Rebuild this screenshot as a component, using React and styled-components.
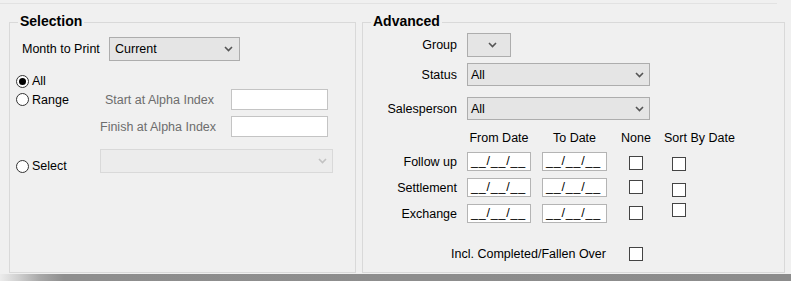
import React from 'react';
import styled, { createGlobalStyle } from 'styled-components';

const GlobalStyle = createGlobalStyle`
  html, body {
    margin: 0;
    padding: 0;
    background: #f0f0f0;
  }
  body {
    font-family: "Liberation Sans", Arial, sans-serif;
    font-size: 12.5px;
    color: #000;
  }
`;

const Window = styled.div`
  width: 791px;
  height: 281px;
  display: flex;
  flex-direction: column;
  background: #f0f0f0;
  overflow: hidden;
`;

const TopRule = styled.div`
  width: 777px;
  height: 1px;
  margin-top: 3px;
  background: #e2e2e2;
`;

const Panels = styled.div`
  flex: 1;
  display: flex;
  gap: 6px;
  padding: 18px 0 0 9px;
`;

const GroupBox = styled.div`
  width: ${p => p.$width}px;
  height: 251px;
  box-sizing: border-box;
  border: 1px solid #d9d9d9;
`;

const Caption = styled.div`
  width: fit-content;
  margin: -10px 0 0 8px;
  padding: 0 2px;
  background: #f0f0f0;
  font-size: 14px;
  font-weight: bold;
  line-height: 16px;
`;

const Row = styled.div`
  display: flex;
  align-items: ${p => p.$align || 'center'};
  height: ${p => p.$h}px;
  margin-top: ${p => p.$top}px;
  padding-left: ${p => p.$indent || 0}px;
`;

const FieldLabel = styled.div`
  width: ${p => p.$width}px;
  margin-right: ${p => p.$gap || 0}px;
  text-align: ${p => p.$right ? 'right' : 'left'};
  color: ${p => p.$muted ? '#6d6d6d' : '#000'};
  white-space: nowrap;
  line-height: 14px;
`;

const ComboBox = styled.div`
  width: ${p => p.$width}px;
  height: ${p => p.$h || 24}px;
  box-sizing: border-box;
  display: flex;
  align-items: center;
  justify-content: space-between;
  padding: 0 ${p => p.$arrowPad || 5}px 0 ${p => p.$textPad || 3}px;
  background: ${p => p.$disabled ? '#ececec' : '#e5e5e5'};
  border: 1px solid ${p => p.$disabled ? '#d9d9d9' : '#adadad'};
  color: ${p => p.$disabled ? '#9a9a9a' : '#000'};
`;

const ChevronSvg = styled.svg`
  flex: none;
  width: 9px;
  height: 6px;
`;

const Chevron = ({ muted }) => (
  <ChevronSvg viewBox="0 0 9 6">
    <polyline
      points="1,1 4.5,4.5 8,1"
      fill="none"
      stroke={muted ? '#c2c2c2' : '#555'}
      strokeWidth="1.6"
    />
  </ChevronSvg>
);

const RadioOption = styled.div`
  width: ${p => p.$width}px;
  display: flex;
  align-items: center;
  gap: 3px;
  line-height: 14px;
`;

const RadioCircle = styled.span`
  flex: none;
  width: 13px;
  height: 13px;
  box-sizing: border-box;
  border: 1px solid #333;
  border-radius: 50%;
  background: #fff;
  display: flex;
  align-items: center;
  justify-content: center;

  &::after {
    content: '';
    width: 7px;
    height: 7px;
    border-radius: 50%;
    background: ${p => p.$checked ? '#000' : 'transparent'};
  }
`;

const TextBox = styled.div`
  width: 97px;
  height: 21px;
  box-sizing: border-box;
  background: #fff;
  border: 1px solid #c4c4c4;
`;

const DateGrid = styled.div`
  display: grid;
  grid-template-columns: 104px 75px 72px 50px 1fr;
  grid-template-rows: 14px 19px 19px 19px;
  row-gap: 7px;
  margin-top: 11px;
  align-items: center;
`;

const HeaderCell = styled.div`
  width: ${p => p.$width ? `${p.$width}px` : 'auto'};
  text-align: ${p => p.$width ? 'center' : 'left'};
  white-space: nowrap;
  line-height: 14px;
`;

const RowLabel = styled.div`
  padding-right: 10px;
  text-align: right;
  white-space: nowrap;
  line-height: 14px;
`;

const DateBox = styled.div`
  width: ${p => p.$width}px;
  height: 19px;
  box-sizing: border-box;
  padding-left: 3px;
  background: #fff;
  border: 1px solid #b4b4b4;
  line-height: 17px;
  letter-spacing: 0.8px;
  white-space: nowrap;
  overflow: hidden;
`;

const CheckBox = styled.span`
  display: block;
  width: 14px;
  height: 14px;
  box-sizing: border-box;
  border: 1px solid #444;
  background: #fff;
  align-self: start;
  margin-top: ${p => p.$top || 0}px;
  margin-left: ${p => p.$left || 0}px;
`;

const StatusStrip = styled.div`
  height: 7px;
  background: linear-gradient(90deg, #ececec 0px, #d0d0d0 18px, #a8a8a8 40px, #8e8e8e 64px, #8c8c8c 100%);
`;

const dateRows = [
  { label: 'Follow up', none: 4, sort: 5 },
  { label: 'Settlement', none: 2, sort: 5 },
  { label: 'Exchange', none: 2, sort: -1 },
];

export default function App() {
  return (
    <Window>
      <GlobalStyle />
      <TopRule />
      <Panels>
        <GroupBox $width={347}>
          <Caption>Selection</Caption>
          <Row $top={8} $h={24} $indent={12}>
            <FieldLabel $width={87}>Month to Print</FieldLabel>
            <ComboBox $width={131} $textPad={5} $arrowPad={6}>
              <span>Current</span>
              <Chevron />
            </ComboBox>
          </Row>
          <Row $top={13} $h={14} $indent={6}>
            <RadioOption $width={84}>
              <RadioCircle $checked />
              All
            </RadioOption>
          </Row>
          <Row $top={1} $h={21} $indent={6}>
            <RadioOption $width={84}>
              <RadioCircle />
              Range
            </RadioOption>
            <FieldLabel $width={114} $gap={17} $right $muted>Start at Alpha Index</FieldLabel>
            <TextBox />
          </Row>
          <Row $top={6} $h={21} $indent={90}>
            <FieldLabel $width={114} $gap={17} $right $muted>Finish at Alpha Index</FieldLabel>
            <TextBox />
          </Row>
          <Row $top={12} $h={24} $indent={6} $align="flex-end">
            <RadioOption $width={84}>
              <RadioCircle />
              Select
            </RadioOption>
            <ComboBox $width={233} $disabled>
              <span />
              <Chevron muted />
            </ComboBox>
          </Row>
        </GroupBox>

        <GroupBox $width={423}>
          <Caption>Advanced</Caption>
          <Row $top={4} $h={24}>
            <FieldLabel $width={94} $gap={10} $right>Group</FieldLabel>
            <ComboBox $width={44} $arrowPad={13}>
              <span />
              <Chevron />
            </ComboBox>
          </Row>
          <Row $top={6} $h={23}>
            <FieldLabel $width={94} $gap={10} $right>Status</FieldLabel>
            <ComboBox $width={183} $h={23}>
              <span>All</span>
              <Chevron />
            </ComboBox>
          </Row>
          <Row $top={11} $h={23}>
            <FieldLabel $width={94} $gap={10} $right>Salesperson</FieldLabel>
            <ComboBox $width={183} $h={23}>
              <span>All</span>
              <Chevron />
            </ComboBox>
          </Row>
          <DateGrid>
            <span />
            <HeaderCell $width={64}>From Date</HeaderCell>
            <HeaderCell $width={65}>To Date</HeaderCell>
            <HeaderCell $width={44}>None</HeaderCell>
            <HeaderCell>Sort By Date</HeaderCell>
            {dateRows.map(r => (
              <React.Fragment key={r.label}>
                <RowLabel>{r.label}</RowLabel>
                <DateBox $width={64}>__/__/__</DateBox>
                <DateBox $width={65}>__/__/__</DateBox>
                <CheckBox $top={r.none} $left={15} />
                <CheckBox $top={r.sort} $left={8} />
              </React.Fragment>
            ))}
          </DateGrid>
          <Row $top={24} $h={14}>
            <FieldLabel $width={243} $gap={23} $right>Incl. Completed/Fallen Over</FieldLabel>
            <CheckBox />
          </Row>
        </GroupBox>
      </Panels>
      <StatusStrip />
    </Window>
  );
}
